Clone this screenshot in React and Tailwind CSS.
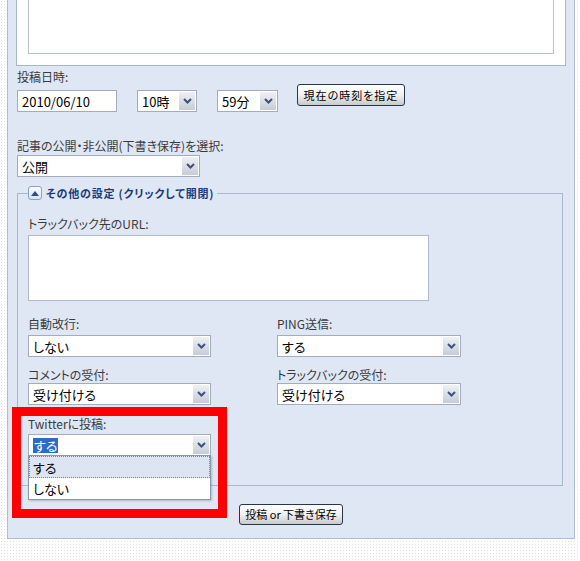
import {useState} from "react";

const font = "font-['Noto_Sans_CJK_JP','Liberation_Sans',sans-serif] [font-feature-settings:'palt']";

function Chevron() {
  return (
    <svg width="9" height="6" viewBox="0 0 9 6">
      <path d="M1 1 L4.5 4.5 L8 1" fill="none" stroke="#3f5079" strokeWidth="2" />
    </svg>
  );
}

function Select({value, width, selected, children}) {
  return (
    <div className="relative" style={{width}}>
      <div className="flex h-[22px] border border-[#a3acbb] bg-white">
        <div className="flex flex-1 items-center pl-[4px] text-[13px] leading-none text-black">
          {selected ? (
            <span className="bg-[#316ac5] px-[1px] py-[1px] text-white">{value}</span>
          ) : (
            value
          )}
        </div>
        <div className="m-[1px] flex w-[16px] items-center justify-center bg-gradient-to-b from-[#eef1f6] to-[#c6ccd8]">
          <Chevron />
        </div>
      </div>
      {children}
    </div>
  );
}

function Label({children, className = ""}) {
  return <div className={"h-[15px] text-[12px] leading-[15px] text-[#3a3a3a] " + className}>{children}</div>;
}

function Button({children, className = ""}) {
  return (
    <button
      className={
        "flex items-center justify-center rounded-[3px] border border-[#27354d] bg-gradient-to-b from-white via-[#f1f1f1] to-[#c9c9c9] text-[11px] leading-none text-black " +
        className
      }
    >
      {children}
    </button>
  );
}

export default function App() {
  const [twitter] = useState("する");

  return (
    <div className={"relative h-[561px] w-[580px] overflow-hidden bg-white bg-[radial-gradient(circle,#dedede_0.6px,transparent_1px)] bg-[length:3px_3px] " + font}>
      <div className="ml-[7px] h-[539px] w-[568px] border-x border-b border-[#aebbd0] bg-[#dfe7f5] pl-[9px]">
        {/* editor box, cut off at the top */}
        <div className="-ml-[1px] h-[66px] w-[550px] border-x border-b border-[#a9b7cc] bg-white px-[11px] pb-[11px]">
          <div className="h-full border-x border-b border-[#b7c3d5] bg-white"></div>
        </div>

        <Label className="mt-[3px]">投稿日時:</Label>
        <div className="flex items-start">
          <div className="mt-[6px] flex h-[22px] w-[100px] items-center border border-[#a3acbb] bg-white pl-[4px] text-[13px] leading-none text-black">
            2010/06/10
          </div>
          <div className="ml-[20px] mt-[6px]">
            <Select value="10時" width={60} />
          </div>
          <div className="ml-[20px] mt-[6px]">
            <Select value="59分" width={61} />
          </div>
          <Button className="ml-[19px] h-[22px] w-[108px] tracking-[1px]">現在の時刻を指定</Button>
        </div>

        <Label className="mt-[26px]">記事の公開・非公開(下書き保存)を選択:</Label>
        <div className="mt-[2px]">
          <Select value="公開" width={183} />
        </div>

        <fieldset className="mt-[9px] w-[546px] border border-[#aab8ce] px-[10px] pb-[29px] pt-[16px]">
          <legend className="flex h-[14px] items-center pr-[3px]">
            <span className="flex h-[14px] w-[14px] items-center justify-center rounded-[3px] border border-[#87a2cc] bg-gradient-to-b from-[#fbfcfe] to-[#d9e3f3]">
              <svg width="8" height="5" viewBox="0 0 8 5">
                <path d="M0 5 L4 0 L8 5 Z" fill="#2d4d8f" />
              </svg>
            </span>
            <span className="ml-[4px] text-[11px] font-bold leading-none tracking-[0.8px] text-[#1b3a78]">その他の設定 (クリックして開閉)</span>
          </legend>

          <Label>トラックバック先のURL:</Label>
          <div className="mt-[4px] h-[66px] w-[401px] border border-[#b0bccd] bg-white"></div>

          <div className="grid grid-cols-[249px_184px]">
            <div>
              <Label className="mt-[15px]">自動改行:</Label>
              <div className="mt-[4px]">
                <Select value="しない" width={183} />
              </div>
            </div>
            <div>
              <Label className="mt-[15px]">PING送信:</Label>
              <div className="mt-[4px]">
                <Select value="する" width={184} />
              </div>
            </div>
            <div>
              <Label className="mt-[10px]">コメントの受付:</Label>
              <div className="mt-[1px]">
                <Select value="受け付ける" width={183} />
              </div>
            </div>
            <div>
              <Label className="mt-[10px]">トラックバックの受付:</Label>
              <div className="mt-[1px]">
                <Select value="受け付ける" width={184} />
              </div>
            </div>
          </div>

          <Label className="mt-[11px]">Twitterに投稿:</Label>
          <div className="mt-[3px]">
            <Select value={twitter} width={183} selected>
              <div className="absolute left-0 top-[21px] z-10 w-full border border-[#8b98ab] bg-white text-[13px] leading-none text-black shadow-[1px_1px_2px_rgba(0,0,0,0.2)]">
                <div className="flex h-[22px] items-center border border-dotted border-[#7a8699] bg-[#dde5f3] pl-[3px]">する</div>
                <div className="flex h-[21px] items-center pl-[4px]">しない</div>
              </div>
            </Select>
          </div>
        </fieldset>

        <Button className="ml-[222px] mt-[18px] h-[21px] w-[104px]">投稿 or 下書き保存</Button>
      </div>

      <div className="absolute left-[12px] top-[407px] h-[111px] w-[215px] border-[9px] border-[#ff0000]"></div>
    </div>
  );
}
